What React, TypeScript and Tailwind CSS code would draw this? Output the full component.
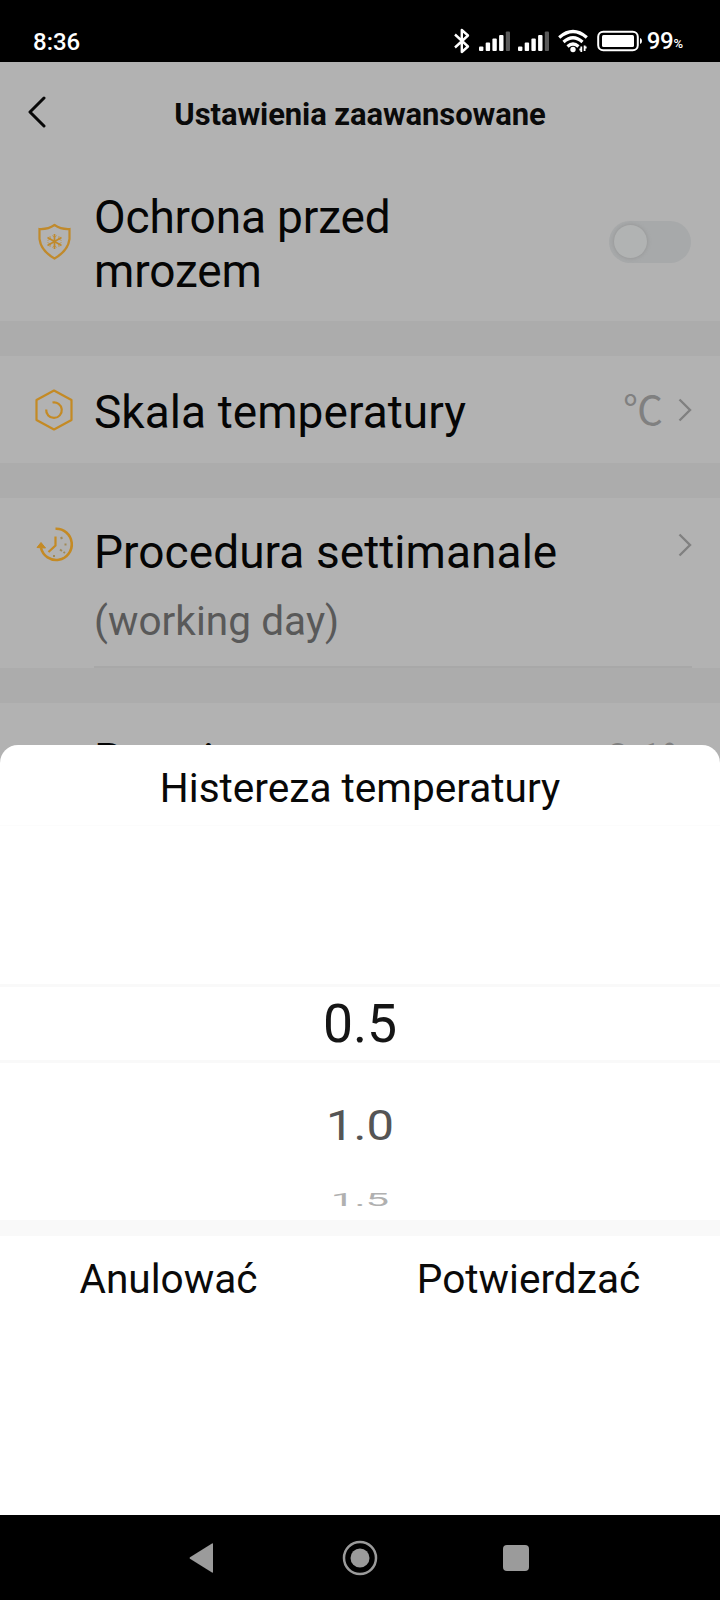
import { ReactNode } from "react"

function StatusBar() {
  return (
    <div className="flex h-[62px] shrink-0 items-start justify-between bg-black pl-[33px] pr-[37px] pt-[28px] text-white">
      <span className="text-[24px] leading-[28px] font-medium">8:36</span>
      <div className="flex h-[26px] items-center">
        <svg width="16" height="26" viewBox="0 0 16 26" fill="none" stroke="white" strokeWidth="2.4" strokeLinejoin="round" className="mr-[9px]">
          <path d="M1 6.5 L14 18.5 L7.8 24 V2 L14 7.5 L1 19.5" />
        </svg>
        <SignalBars />
        <div className="w-[8px]" />
        <SignalBars />
        <svg width="30" height="26" viewBox="0 0 30 26" fill="none" stroke="white" strokeWidth="3.2" className="ml-[9px]">
          <path d="M1.2 9.5 Q15 -2.5 28.8 9.5" />
          <path d="M5.5 14 Q15 5.5 24.5 14" />
          <path d="M9.5 18.5 Q15 13.5 20.5 18.5" />
          <circle cx="15" cy="21.5" r="2.7" fill="white" stroke="none" />
          <path d="M23.3 18.5 V24 M21.4 21.5 H23.3 M26.6 17.5 V23 M26.6 19.5 H28.6" strokeWidth="1.8" />
        </svg>
        <svg width="46" height="22" viewBox="0 0 46 22" className="ml-[9px] mr-[4px]">
          <rect x="1.2" y="1.7" width="39.6" height="18.6" rx="5" fill="none" stroke="white" strokeWidth="2" />
          <rect x="5" y="5" width="32" height="12" rx="1.5" fill="white" />
          <path d="M43 8 Q45 8.5 45 11 T43 14 Z" fill="white" />
        </svg>
        <span className="text-[24px] leading-[28px] font-medium tracking-[-0.3px]">99</span>
        <span className="pt-[5px] text-[13px] leading-[20px] font-medium">%</span>
      </div>
    </div>
  )
}

function SignalBars() {
  return (
    <svg width="31" height="26" viewBox="0 0 31 26" fill="white">
      <rect x="0" y="18.5" width="4.4" height="4.5" rx="1" />
      <rect x="6.7" y="14.5" width="4.4" height="8.5" rx="1" />
      <rect x="13.4" y="10.5" width="4.4" height="12.5" rx="1" />
      <rect x="20.1" y="7" width="4.4" height="16" rx="1" />
      <rect x="26.8" y="3.5" width="4.2" height="19.5" rx="1" fill="#5a5a5a" />
    </svg>
  )
}

function Chevron() {
  return (
    <svg width="14" height="24" viewBox="0 0 14 24" fill="none" stroke="#808080" strokeWidth="2.4">
      <path d="M1.5 1.5 L12 12 L1.5 22.5" />
    </svg>
  )
}

function ShieldIcon() {
  return (
    <svg width="36" height="38" viewBox="0 0 36 38" fill="none" stroke="#c08a2c" strokeWidth="2.2" className="-mt-[4px]">
      <path d="M17.5 2 Q11 6.5 2.5 6 V16 Q4 28 17.5 35.5 Q31 28 32.5 16 V6 Q24 6.5 17.5 2 Z" />
      <path d="M17.5 11 V26 M10.5 14.5 L24.5 22.5 M24.5 14.5 L10.5 22.5" strokeWidth="1.7" />
      <path d="M15.3 12.5 L17.5 14.5 L19.7 12.5 M15.3 24.5 L17.5 22.5 L19.7 24.5 M10.5 17.5 L13.3 16 L13 13 M24.5 19.5 L21.7 21 L22 24 M24.5 17.5 L21.7 16 L22 13 M10.5 19.5 L13.3 21 L13 24" strokeWidth="1" opacity="0.7" />
    </svg>
  )
}

function HexIcon() {
  return (
    <svg width="38" height="42" viewBox="0 0 38 42" fill="none" stroke="#c48a24" strokeWidth="2.2" strokeLinejoin="round">
      <path d="M19 1.5 L36.5 11 V31 L19 40.5 L1.5 31 V11 Z" />
      <path d="M17.5 13.5 A7.8 7.8 0 1 1 11.2 20.5" />
    </svg>
  )
}

function ClockIcon() {
  return (
    <svg width="38" height="36" viewBox="0 0 38 36" fill="none" stroke="#c48a24" strokeWidth="2.6">
      <path d="M19.5 1.8 A15.6 15.6 0 1 1 5 21" />
      <path d="M1 20.5 L5 15.5 L9.5 21 Z" fill="#c48a24" strokeWidth="1" />
      <path d="M19.5 9.5 V18.5 L12.5 25" strokeWidth="2.2" />
      <path d="M24.5 11.5 L26.5 10.5 M28.5 17.5 H30.5 M27.5 25 L29 26 M24 22.5 L26 24 M18 28 V30" strokeWidth="2" stroke="#a08a58" />
    </svg>
  )
}

function Divider() {
  return <div className="h-[35px] shrink-0 bg-[#acacac]" />
}

function Label({ children }: { children: ReactNode }) {
  return <span className="text-[46px] leading-[54px] text-[#050505]">{children}</span>
}

export default function App() {
  return (
    <div className="relative flex h-[1600px] w-[720px] flex-col overflow-hidden bg-[#b2b2b2] font-['Roboto',sans-serif]">
      <StatusBar />

      <div className="relative flex h-[104px] shrink-0 items-center justify-center pt-px">
        <svg width="18" height="32" viewBox="0 0 18 32" fill="none" stroke="#080808" strokeWidth="3" strokeLinecap="round" strokeLinejoin="round" className="absolute left-[28px] top-[34px]">
          <path d="M16 2 L2 16 L16 30" />
        </svg>
        <h1 className="text-[31px] leading-[36px] font-bold tracking-[-0.1px] text-[#0a0a0a]">Ustawienia zaawansowane</h1>
      </div>

      <div className="flex h-[155px] shrink-0 items-center pl-[37px] pr-[29px]">
        <ShieldIcon />
        <div className="ml-[21px] w-[360px] pt-px tracking-[-0.15px]">
          <Label>Ochrona przed mrozem</Label>
        </div>
        <div className="-mt-[4px] ml-auto flex h-[42px] w-[82px] items-center rounded-full bg-[#a7a9aa] pl-[5px]">
          <div className="size-[33px] rounded-full bg-[#b1b3b3] shadow-[0_0_4px_#929292]" />
        </div>
      </div>
      <Divider />

      <div className="flex h-[107px] shrink-0 items-center pl-[35px] pr-[28px]">
        <HexIcon />
        <div className="ml-[21px] flex h-full flex-1 items-center pt-[4px] tracking-[0.06px]">
          <Label>Skala temperatury</Label>
        </div>
        <span className="-mt-[3px] mr-[15px] font-['Noto_Sans_CJK_SC',sans-serif] text-[40px] leading-[48px] text-[#808080]">℃</span>
        <Chevron />
      </div>
      <Divider />

      <div className="flex h-[170px] shrink-0 pl-[36px] pr-[28px]">
        <div className="pt-[29px]">
          <ClockIcon />
        </div>
        <div className="ml-[20px] flex flex-1 flex-col border-b-2 border-[#a8a8a8] pt-[27px] tracking-[0.06px]">
          <Label>Procedura settimanale</Label>
          <span className="mt-[18px] text-[40.5px] leading-[48px] text-[#595959]">(working day)</span>
        </div>
        <div className="-ml-[14px] pt-[35px]">
          <Chevron />
        </div>
      </div>
      <Divider />

      <div className="flex shrink-0 justify-between pl-[94px] pr-[43px] pt-[30px]">
        <Label>Bateria</Label>
        <span className="pt-[2px] text-[40px] leading-[48px] text-[#808080]">0.1°</span>
      </div>

      {/* picker sheet */}
      <div className="absolute inset-x-0 bottom-[85px] top-[745px] flex flex-col rounded-t-[18px] bg-white text-black">
        <div className="flex h-[81px] shrink-0 items-center justify-center border-b border-[#fcfcfc] pt-[6px]">
          <h2 className="text-[40.6px] leading-[48px] text-[#080808]">Histereza temperatury</h2>
        </div>
        <div className="flex h-[394px] shrink-0 flex-col items-center pt-[158px]">
          <div className="flex h-[79px] w-full shrink-0 items-center justify-center border-y-[3px] border-[#f9f9f9]">
            <span className="text-[53.5px] leading-[60px] text-[#151515]">0.5</span>
          </div>
          <span className="mt-[33px] origin-center scale-y-[0.88] text-[49px] leading-[60px] text-[#555]">1.0</span>
          <span className="mt-[14px] origin-center scale-y-[0.42] text-[42px] leading-[60px] text-[#b0b0b0]">1.5</span>
        </div>
        <div className="h-[16px] shrink-0 bg-[#f9f9f9]" />
        <div className="flex pt-[19px] text-[40.6px] leading-[48px] text-[#0a0a0a]">
          <div className="w-[338px] text-center">Anulować</div>
          <div className="w-[384px] text-center">Potwierdzać</div>
        </div>
      </div>

      <div className="absolute inset-x-0 bottom-0 flex h-[85px] items-center bg-black">
        <svg width="25" height="30" viewBox="0 0 25 30" fill="#9b9b9b" className="ml-[189px]">
          <path d="M24 1 V29 Q24 30 23 29.5 L1 15.8 Q0 15 1 14.3 L23 0.5 Q24 0 24 1 Z" />
        </svg>
        <svg width="36" height="36" viewBox="0 0 36 36" className="ml-[128px]">
          <circle cx="18" cy="18" r="16" fill="none" stroke="#9b9b9b" strokeWidth="2.5" />
          <circle cx="18" cy="18" r="9.5" fill="#9b9b9b" />
        </svg>
        <div className="ml-[125px] size-[26px] rounded-[4px] bg-[#9b9b9b]" />
      </div>
    </div>
  )
}
